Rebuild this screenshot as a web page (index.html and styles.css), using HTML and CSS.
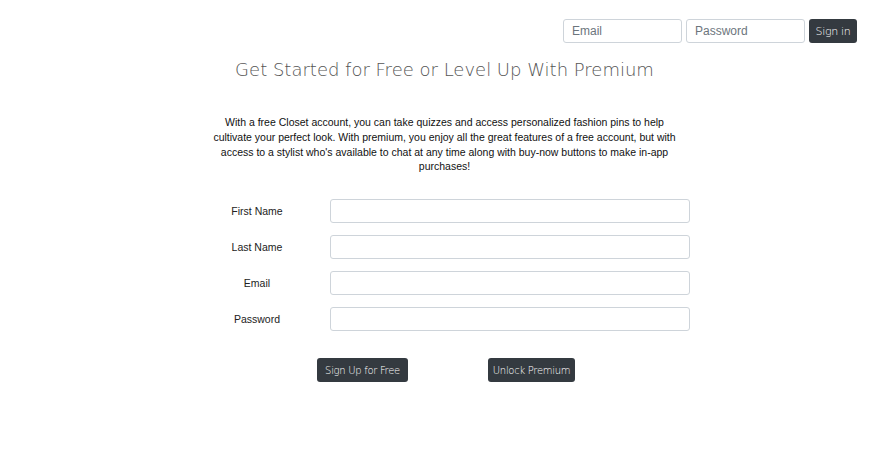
FILE: index.html
```html
<!DOCTYPE html>
<html>
<head>
<meta charset="utf-8">
<link rel="stylesheet" href="styles.css">
</head>
<body>
<header class="topbar">
  <input class="top-input" type="text" placeholder="Email">
  <input class="top-input" type="password" placeholder="Password">
  <button class="btn btn-top">Sign in</button>
</header>
<main class="main">
  <h1 class="title">Get Started for Free or Level Up With Premium</h1>
  <p class="intro">With a free Closet account, you can take quizzes and access personalized fashion pins to help cultivate your perfect look. With premium, you enjoy all the great features of a free account, but with access to a stylist who's available to chat at any time along with buy-now buttons to make in-app purchases!</p>
  <form class="signup">
    <label class="lbl">First Name</label><input class="field" type="text">
    <label class="lbl">Last Name</label><input class="field" type="text">
    <label class="lbl">Email</label><input class="field" type="text">
    <label class="lbl">Password</label><input class="field" type="password">
  </form>
  <div class="actions">
    <button class="btn btn-act btn-free">Sign Up for Free</button>
    <button class="btn btn-act btn-prem">Unlock Premium</button>
  </div>
</main>
</body>
</html>
```
FILE: styles.css
```css
* { box-sizing: border-box; }
body {
  margin: 0;
  background: #fff;
  font-family: "Liberation Sans", Arial, sans-serif;
  font-size: 10.5px;
  color: #212529;
}
.topbar {
  display: flex;
  justify-content: flex-end;
  gap: 4px;
  padding: 19px 32px 0 0;
}
.top-input {
  width: 119px;
  height: 24px;
  border: 1px solid #ced4da;
  border-radius: 3px;
  padding: 0 8px;
  font-family: "Liberation Sans", Arial, sans-serif;
  font-size: 12px;
  color: #495057;
}
.top-input::placeholder { color: #6c757d; }
.btn {
  background: #343a40;
  color: #fff;
  border: none;
  border-radius: 3px;
  height: 24px;
  font-family: "DejaVu Sans", sans-serif;
  font-weight: 200;
  font-size: 10px;
  letter-spacing: -0.3px;
  padding: 0;
}
.btn-top { width: 48px; font-size: 11px; }
.main { display: flex; flex-direction: column; }
.title {
  margin: 15px 0 0;
  text-align: center;
  font-family: "DejaVu Sans", sans-serif;
  font-weight: 200;
  font-size: 18px;
  color: #555;
  line-height: 24px;
}
.intro {
  width: 476px;
  margin: 33px auto 0;
  text-align: center;
  line-height: 14.8px;
  color: #111;
}
.signup {
  display: grid;
  grid-template-columns: 98px 360px;
  column-gap: 24px;
  row-gap: 12px;
  margin: 25px 0 0 208px;
  align-items: center;
}
.lbl { text-align: center; color: #222; }
.field {
  height: 24px;
  border: 1px solid #ced4da;
  border-radius: 3px;
}
.actions {
  display: flex;
  gap: 80px;
  margin: 27px 0 0 317px;
}
.btn-free { width: 91px; }
.btn-prem { width: 87px; }
```
